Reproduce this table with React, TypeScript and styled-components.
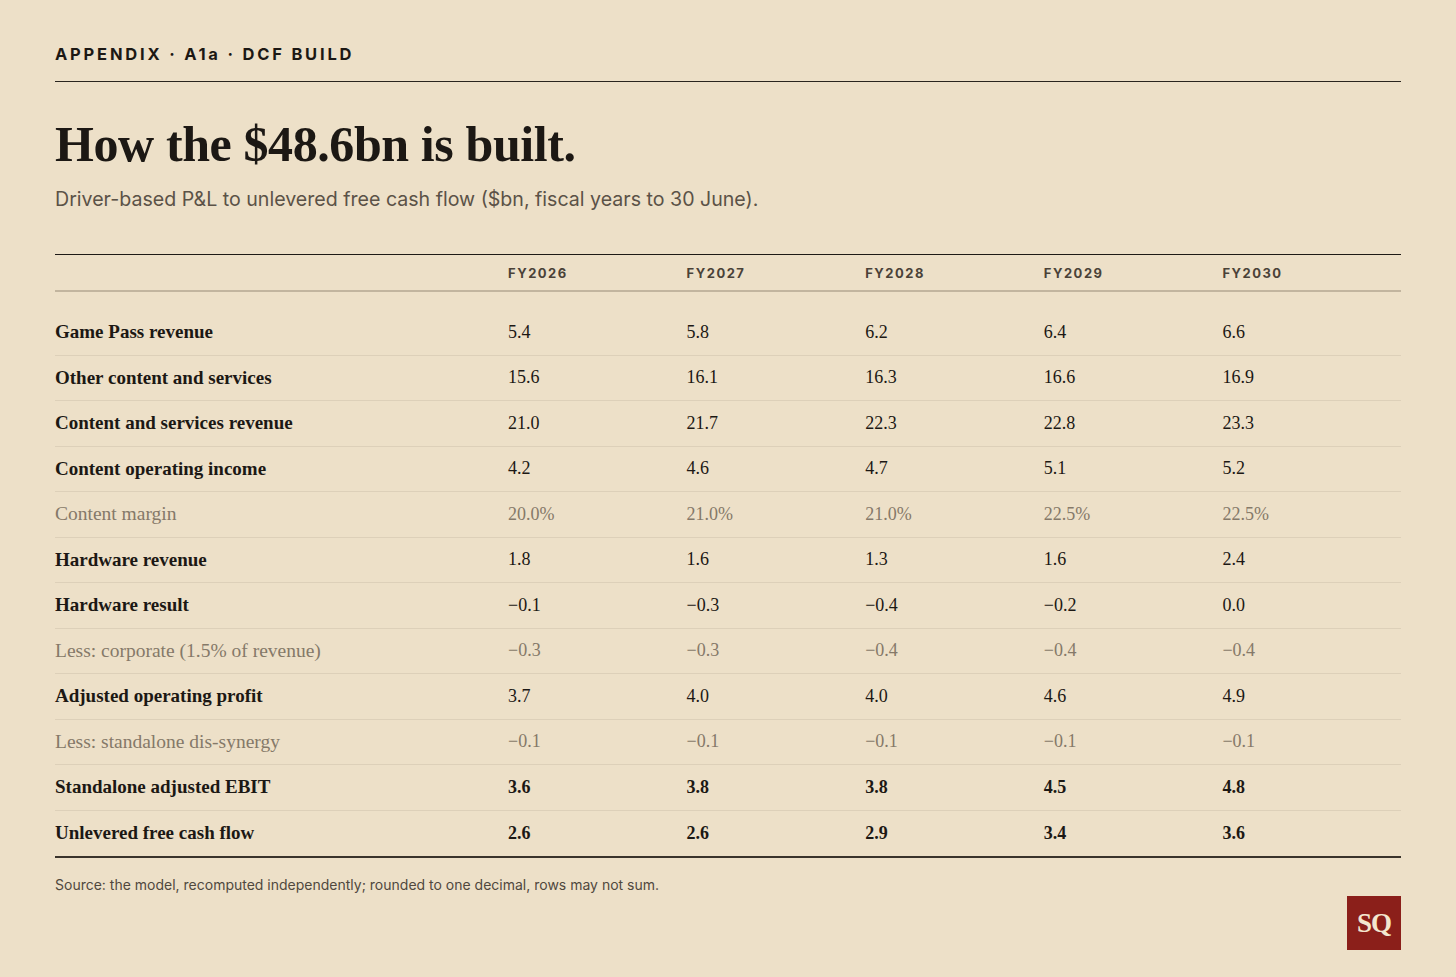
import React from "react";
import styled, { createGlobalStyle } from "styled-components";

const Global = createGlobalStyle`
  html, body { margin: 0; padding: 0; background: #ede0c8; }
  body { font-family: "Liberation Serif", serif; color: #1c1814; }
`;

const Page = styled.div`
  box-sizing: border-box;
  width: 1456px;
  min-height: 977px;
  padding: 45px 55px 0 55px;
  background: #ede0c8;
`;

const Kicker = styled.div`
  font-family: Inter, "Liberation Sans", Arial, sans-serif;
  font-weight: 700;
  font-size: 16.5px;
  line-height: 18px;
  letter-spacing: 2.8px;
  color: #1c1814;
  padding-bottom: 18px;
  border-bottom: 1px solid #2a251f;
`;

const Title = styled.h1`
  margin: 35px 0 0 0;
  font-family: "Liberation Serif", serif;
  font-weight: 700;
  font-size: 50px;
  line-height: 55px;
  letter-spacing: -0.4px;
  color: #1c1814;
`;

const Subtitle = styled.p`
  margin: 15px 0 0 0;
  font-family: Inter, "Liberation Sans", Arial, sans-serif;
  font-size: 19.6px;
  line-height: 24px;
  color: #5b5247;
`;

const Table = styled.div`
  margin-top: 43px;
  border-top: 1px solid #1e1a16;
  border-bottom: 2px solid #3a342c;
`;

const Grid = styled.div`
  display: grid;
  grid-template-columns: 453px repeat(5, 1fr);
  align-items: center;
`;

const HeaderRow = styled(Grid)`
  box-sizing: border-box;
  height: 37px;
  border-bottom: 2px solid #c2b59f;
`;

const HeadCell = styled.div`
  font-family: Inter, "Liberation Sans", Arial, sans-serif;
  font-weight: 700;
  font-size: 13px;
  letter-spacing: 1.5px;
  color: #4a4238;
`;

const Body = styled.div`
  padding-top: 18px;
`;

const Row = styled(Grid)`
  box-sizing: border-box;
  height: 45.5px;
  &:not(:last-child) {
    border-bottom: 1px solid #ddd0b9;
  }
`;

const Label = styled.div<{ $muted?: boolean }>`
  font-family: "Liberation Serif", serif;
  font-size: ${(p) => (p.$muted ? "19.5px" : "19px")};
  font-weight: ${(p) => (p.$muted ? 400 : 700)};
  color: ${(p) => (p.$muted ? "#857969" : "#1c1814")};
`;

const Value = styled.div<{ $muted?: boolean; $bold?: boolean }>`
  font-family: "Liberation Serif", serif;
  font-size: 18px;
  font-weight: ${(p) => (p.$bold ? 700 : 400)};
  color: ${(p) => (p.$muted ? "#857969" : "#1c1814")};
`;

const Footer = styled.div`
  display: flex;
  flex-direction: column;
`;

const Note = styled.p`
  margin: 18px 0 0 0;
  font-family: Inter, "Liberation Sans", Arial, sans-serif;
  font-size: 14px;
  line-height: 18px;
  color: #50483e;
`;

const Logo = styled.div`
  align-self: flex-end;
  margin-top: 2px;
  width: 54px;
  height: 54px;
  background: #8b1f1a;
  color: #f3e6cf;
  display: flex;
  align-items: center;
  justify-content: center;
  font-family: "Liberation Serif", serif;
  font-weight: 700;
  font-size: 27px;
  letter-spacing: -1px;
`;

type R = { label: string; values: string[]; muted?: boolean; bold?: boolean };

const years = ["FY2026", "FY2027", "FY2028", "FY2029", "FY2030"];

const rows: R[] = [
  { label: "Game Pass revenue", values: ["5.4", "5.8", "6.2", "6.4", "6.6"] },
  { label: "Other content and services", values: ["15.6", "16.1", "16.3", "16.6", "16.9"] },
  { label: "Content and services revenue", values: ["21.0", "21.7", "22.3", "22.8", "23.3"] },
  { label: "Content operating income", values: ["4.2", "4.6", "4.7", "5.1", "5.2"] },
  { label: "Content margin", values: ["20.0%", "21.0%", "21.0%", "22.5%", "22.5%"], muted: true },
  { label: "Hardware revenue", values: ["1.8", "1.6", "1.3", "1.6", "2.4"] },
  { label: "Hardware result", values: ["\u22120.1", "\u22120.3", "\u22120.4", "\u22120.2", "0.0"] },
  { label: "Less: corporate (1.5% of revenue)", values: ["\u22120.3", "\u22120.3", "\u22120.4", "\u22120.4", "\u22120.4"], muted: true },
  { label: "Adjusted operating profit", values: ["3.7", "4.0", "4.0", "4.6", "4.9"] },
  { label: "Less: standalone dis-synergy", values: ["\u22120.1", "\u22120.1", "\u22120.1", "\u22120.1", "\u22120.1"], muted: true },
  { label: "Standalone adjusted EBIT", values: ["3.6", "3.8", "3.8", "4.5", "4.8"], bold: true },
  { label: "Unlevered free cash flow", values: ["2.6", "2.6", "2.9", "3.4", "3.6"], bold: true },
];

export default function App() {
  return (
    <>
      <Global />
      <Page>
        <Kicker>APPENDIX · A1a · DCF BUILD</Kicker>
        <Title>How the $48.6bn is built.</Title>
        <Subtitle>Driver-based P&amp;L to unlevered free cash flow ($bn, fiscal years to 30 June).</Subtitle>
        <Table>
          <HeaderRow>
            <HeadCell />
            {years.map((y) => (
              <HeadCell key={y}>{y}</HeadCell>
            ))}
          </HeaderRow>
          <Body>
            {rows.map((r) => (
              <Row key={r.label}>
                <Label $muted={r.muted}>{r.label}</Label>
                {r.values.map((v, i) => (
                  <Value key={i} $muted={r.muted} $bold={r.bold}>
                    {v}
                  </Value>
                ))}
              </Row>
            ))}
          </Body>
        </Table>
        <Footer>
          <Note>Source: the model, recomputed independently; rounded to one decimal, rows may not sum.</Note>
          <Logo>SQ</Logo>
        </Footer>
      </Page>
    </>
  );
}
